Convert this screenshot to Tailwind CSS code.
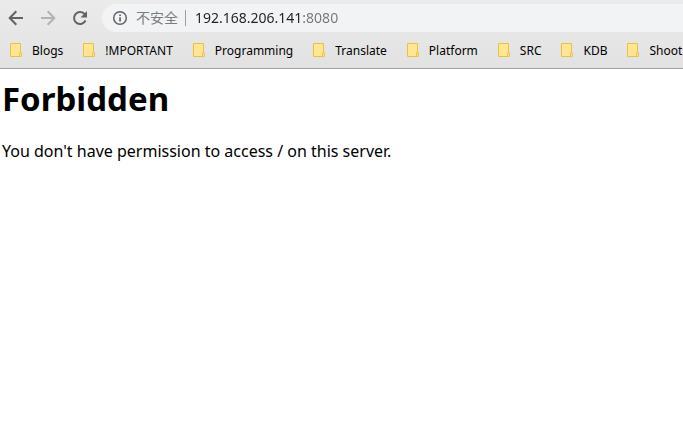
<!DOCTYPE html>
<html lang="en">
<head>
<meta charset="utf-8">
<meta name="viewport" content="width=device-width, initial-scale=1">
<title>403 Forbidden</title>
<script src="https://cdn.jsdelivr.net/npm/@tailwindcss/browser@4"></script>
</head>
<body class="min-h-screen overflow-x-hidden bg-white font-['Noto_Sans','Noto_Sans_CJK_SC',sans-serif] text-black">
<svg class="hidden" aria-hidden="true">
  <symbol id="folder" viewBox="0 0 12 14">
    <path d="M.5.5h10v13H.5z" fill="#ffe694" stroke="#e9c33f"/>
    <rect x="9.500" y="9.500" width="2" height="4" rx=".5" fill="#ffe694" stroke="#e9c33f"/>
  </symbol>
</svg>
<header class="border-b border-[#a0a0a0] bg-linear-to-b from-[#ebebeb] to-[#e2e2e2]">
  <div class="flex items-center pt-1 pl-2">
    <nav class="flex shrink-0 gap-4" aria-label="History">
      <button type="button" aria-label="Back" class="size-4"><svg viewBox="0 0 16 16" class="size-4" fill="none" stroke="#5f6368" stroke-width="2"><path d="M15 8H2.500M8.300 1.300 1.700 8l6.600 6.700"/></svg></button>
      <button type="button" aria-label="Forward" disabled class="size-4"><svg viewBox="0 0 16 16" class="size-4" fill="none" stroke="#b1b2b4" stroke-width="2"><path d="M1 8h12.500M7.700 1.300 14.300 8l-6.600 6.700"/></svg></button>
      <button type="button" aria-label="Reload" class="size-4"><svg viewBox="0 0 16 16" class="size-4"><path d="M13.500 10.500A6 6 0 1 1 12.300 3.800L14 5.500" fill="none" stroke="#5f6368" stroke-width="2"/><path d="M15 1v6.500H8.500z" fill="#5f6368"/></svg></button>
    </nav>
    <div class="ml-3.5 flex h-7 min-w-0 flex-1 items-center rounded-l-full bg-[#f1f3f4] pl-2.5 text-sm">
      <button type="button" class="flex shrink-0 items-center gap-2 text-[#7a7d80]">
        <svg viewBox="0 0 16 16" class="size-4" aria-hidden="true"><circle cx="8" cy="8" r="6.300" fill="none" stroke="#5f6368" stroke-width="1.500"/><path d="M7.200 7.200h1.700v4.300H7.200zM7.200 4.500h1.700v1.600H7.200z" fill="#5f6368"/></svg>
        <span lang="zh-CN" class="pb-0.5 font-['Noto_Sans_CJK_SC',sans-serif] leading-5">不安全</span>
      </button>
      <span class="ml-[7px] h-4 w-px shrink-0 bg-[#9b9da0]"></span>
      <input type="text" aria-label="Address" value="192.168.206.141:8080" class="ml-[9px] h-7 min-w-0 flex-1 bg-linear-to-r from-[#202124] from-[107px] to-[#73767a] to-[107px] bg-clip-text pb-0.5 text-transparent outline-none">
    </div>
  </div>
  <nav aria-label="Bookmarks" class="flex h-9 items-center gap-5 overflow-hidden pl-2.5 text-xs whitespace-nowrap">
    <a href="#" class="flex shrink-0 items-center gap-2.5"><svg class="h-3.5 w-3"><use href="#folder"/></svg><span class="pt-0.5">Blogs</span></a>
    <a href="#" class="flex shrink-0 items-center gap-2.5"><svg class="h-3.5 w-3"><use href="#folder"/></svg><span class="pt-0.5">!MPORTANT</span></a>
    <a href="#" class="flex shrink-0 items-center gap-2.5"><svg class="h-3.5 w-3"><use href="#folder"/></svg><span class="pt-0.5">Programming</span></a>
    <a href="#" class="flex shrink-0 items-center gap-2.5"><svg class="h-3.5 w-3"><use href="#folder"/></svg><span class="pt-0.5">Translate</span></a>
    <a href="#" class="flex shrink-0 items-center gap-2.5"><svg class="h-3.5 w-3"><use href="#folder"/></svg><span class="pt-0.5">Platform</span></a>
    <a href="#" class="flex shrink-0 items-center gap-2.5"><svg class="h-3.5 w-3"><use href="#folder"/></svg><span class="pt-0.5">SRC</span></a>
    <a href="#" class="flex shrink-0 items-center gap-2.5"><svg class="h-3.5 w-3"><use href="#folder"/></svg><span class="pt-0.5">KDB</span></a>
    <a href="#" class="flex shrink-0 items-center gap-2.5"><svg class="h-3.5 w-3"><use href="#folder"/></svg><span class="pt-0.5">Shoot</span></a>
  </nav>
</header>
<main class="px-0.5 pt-2">
  <h1 class="text-[33px] leading-11 font-bold">Forbidden</h1>
  <p class="mt-5 text-base leading-5">You don't have permission to access / on this server.</p>
</main>
</body>
</html>
